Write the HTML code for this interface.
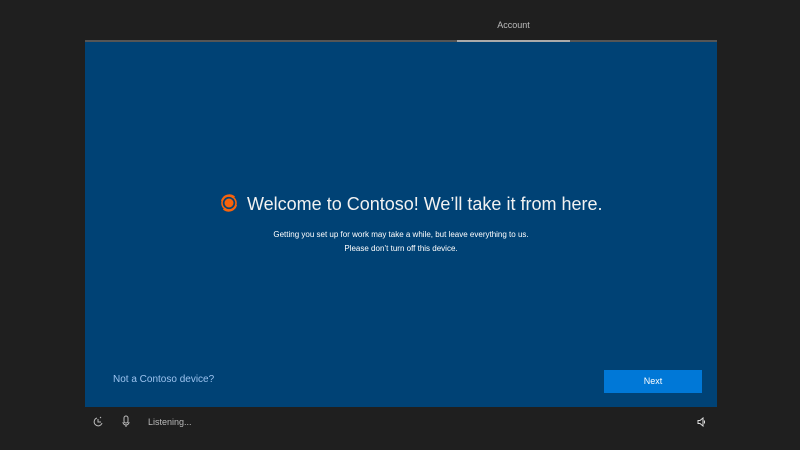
<!DOCTYPE html>
<html><head><style>
body{margin:0;width:800px;height:450px;background:#1f1f1f;font-family:"Liberation Sans",sans-serif;position:relative;overflow:hidden}
.tab{position:absolute;left:457px;width:113px;top:20px;text-align:center;color:#bbb;font-size:9px}
.line{position:absolute;left:85px;width:632px;top:40px;height:2px;background:#555}
.line2{position:absolute;left:457px;width:113px;top:40px;height:2px;background:#aaa}
.panel{position:absolute;left:85px;top:42px;width:632px;height:365px;background:#004275}
h1{position:absolute;left:162px;top:152px;margin:0;white-space:nowrap;color:#f2f2f2;font-weight:normal;font-size:18px}
.logo{position:absolute;left:133px;top:150px}
p{position:absolute;left:0;width:632px;margin:0;text-align:center;color:#fff;font-size:8px}
.link{position:absolute;left:28px;top:332px;color:#9cc3ef;font-size:10px}
.btn{position:absolute;left:519px;top:328px;width:98px;height:23px;background:#0078d7;color:#fff;font-size:9px;text-align:center;line-height:23px}
.ft{position:absolute;color:#bbb;font-size:9px}
</style></head><body>
<div class="tab">Account</div>
<div class="line"></div><div class="line2"></div>
<div class="panel">
<svg class="logo" width="22" height="22" viewBox="0 0 22 22"><circle cx="11" cy="11" r="4.5" fill="#f7630c"/><path d="M3 9 A8.5 8.5 0 0 1 17 4.5 L15 6.5 A6 6 0 0 0 5 9Z M19 13 A8.5 8.5 0 0 1 5 17.5 L7 15.5 A6 6 0 0 0 17 13Z" fill="#f7630c"/><circle cx="11" cy="11" r="7" fill="none" stroke="#f7630c" stroke-width="1.6"/></svg>
<h1>Welcome to Contoso! We’ll take it from here.</h1>
<p style="top:188px">Getting you set up for work may take a while, but leave everything to us.</p>
<p style="top:202px">Please don’t turn off this device.</p>
<div class="link">Not a Contoso device?</div>
<div class="btn">Next</div>
</div>
<svg style="position:absolute;left:92px;top:416px" width="12" height="12" viewBox="0 0 12 12" fill="none" stroke="#bbb"><path d="M5 2 A4 4 0 1 0 10 7 M6 3 v3 h3 M8 1 l1 1"/></svg>
<svg style="position:absolute;left:122px;top:415px" width="8" height="13" viewBox="0 0 8 13" fill="none" stroke="#bbb"><rect x="2" y="1" width="4" height="7" rx="2"/><path d="M1 7 a3 3 0 0 0 6 0 M4 10 v2"/></svg>
<div class="ft" style="left:148px;top:417px">Listening...</div>
<svg style="position:absolute;left:697px;top:417px" width="10" height="10" viewBox="0 0 10 10" fill="none" stroke="#ddd"><path d="M1 3.5h2l3-2.5v8l-3-2.5h-2z M7.5 3.5v3"/></svg>
</body></html>
